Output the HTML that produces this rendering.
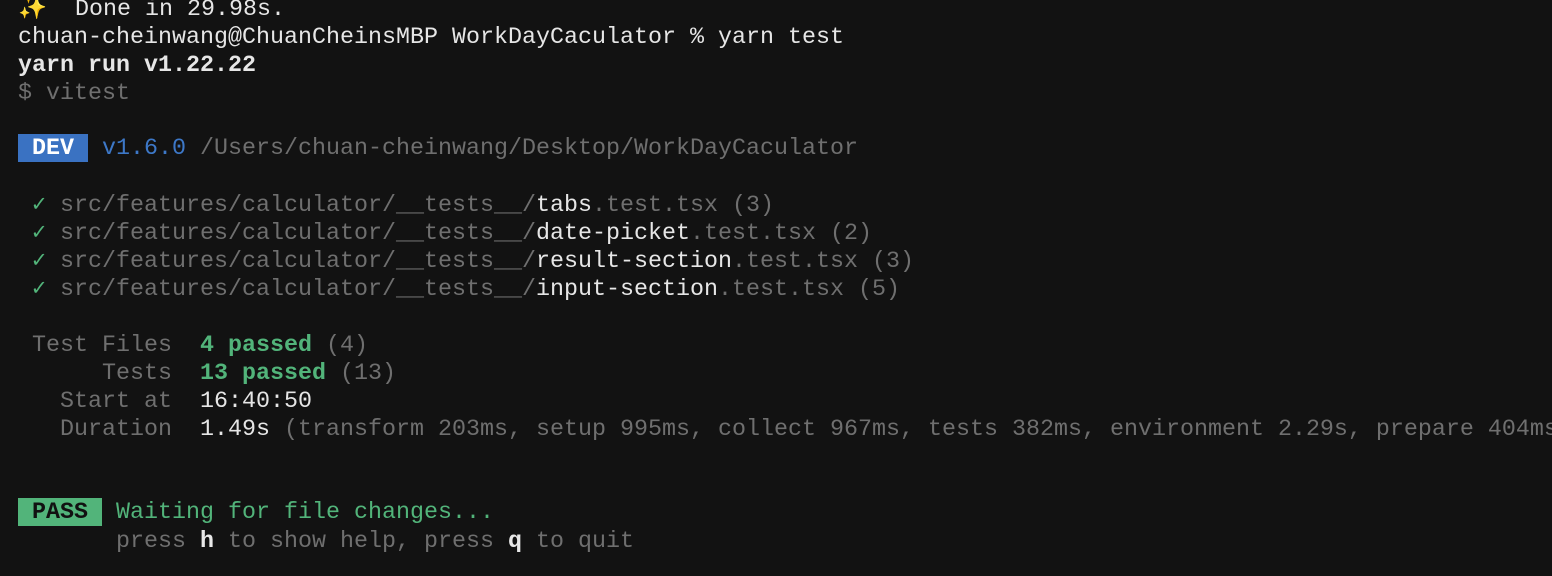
<!DOCTYPE html>
<html><head><meta charset="utf-8"><style>
html,body{margin:0;padding:0;background:#121212;width:1552px;height:576px;overflow:hidden}
.l{position:absolute;left:18px;height:28px;line-height:28px;white-space:pre;font-family:"Liberation Mono","DejaVu Sans Mono",monospace;font-size:23.33px;color:#e6e6e6}
.g{color:#6f6f6f}.gr{color:#52b47a}.b{color:#3d78c8}.w{color:#e8e8e8}.bd{font-weight:bold}
.dev,.pass{display:inline-block;height:28px;line-height:30px;vertical-align:top;font-weight:bold}
.dev{background:#3a72c2;color:#fff}
.pass{background:#52b47a;color:#111}
</style></head><body>
<div class="l" style="top:-4px">✨  Done in 29.98s.</div>
<div class="l" style="top:24px">chuan-cheinwang@ChuanCheinsMBP WorkDayCaculator % yarn test</div>
<div class="l bd" style="top:52px">yarn run v1.22.22</div>
<div class="l g" style="top:80px">$ vitest</div>
<div class="l" style="top:134px;line-height:30px"><span class="dev"> DEV </span> <span class="b">v1.6.0</span> <span class="g">/Users/chuan-cheinwang/Desktop/WorkDayCaculator</span></div>
<div class="l" style="top:192px"> <span class="gr">✓</span> <span class="g">src/features/calculator/__tests__/</span>tabs<span class="g">.test.tsx (3)</span></div>
<div class="l" style="top:220px"> <span class="gr">✓</span> <span class="g">src/features/calculator/__tests__/</span>date-picket<span class="g">.test.tsx (2)</span></div>
<div class="l" style="top:248px"> <span class="gr">✓</span> <span class="g">src/features/calculator/__tests__/</span>result-section<span class="g">.test.tsx (3)</span></div>
<div class="l" style="top:276px"> <span class="gr">✓</span> <span class="g">src/features/calculator/__tests__/</span>input-section<span class="g">.test.tsx (5)</span></div>
<div class="l" style="top:332px"><span class="g"> Test Files  </span><span class="gr bd">4 passed</span><span class="g"> (4)</span></div>
<div class="l" style="top:360px"><span class="g">      Tests  </span><span class="gr bd">13 passed</span><span class="g"> (13)</span></div>
<div class="l" style="top:388px"><span class="g">   Start at  </span>16:40:50</div>
<div class="l" style="top:416px"><span class="g">   Duration  </span>1.49s<span class="g"> (transform 203ms, setup 995ms, collect 967ms, tests 382ms, environment 2.29s, prepare 404ms)</span></div>
<div class="l" style="top:498px;line-height:30px"><span class="pass"> PASS </span> <span class="gr">Waiting for file changes...</span></div>
<div class="l g" style="top:528px">       press <span class="w bd">h</span> to show help, press <span class="w bd">q</span> to quit</div>
</body></html>
